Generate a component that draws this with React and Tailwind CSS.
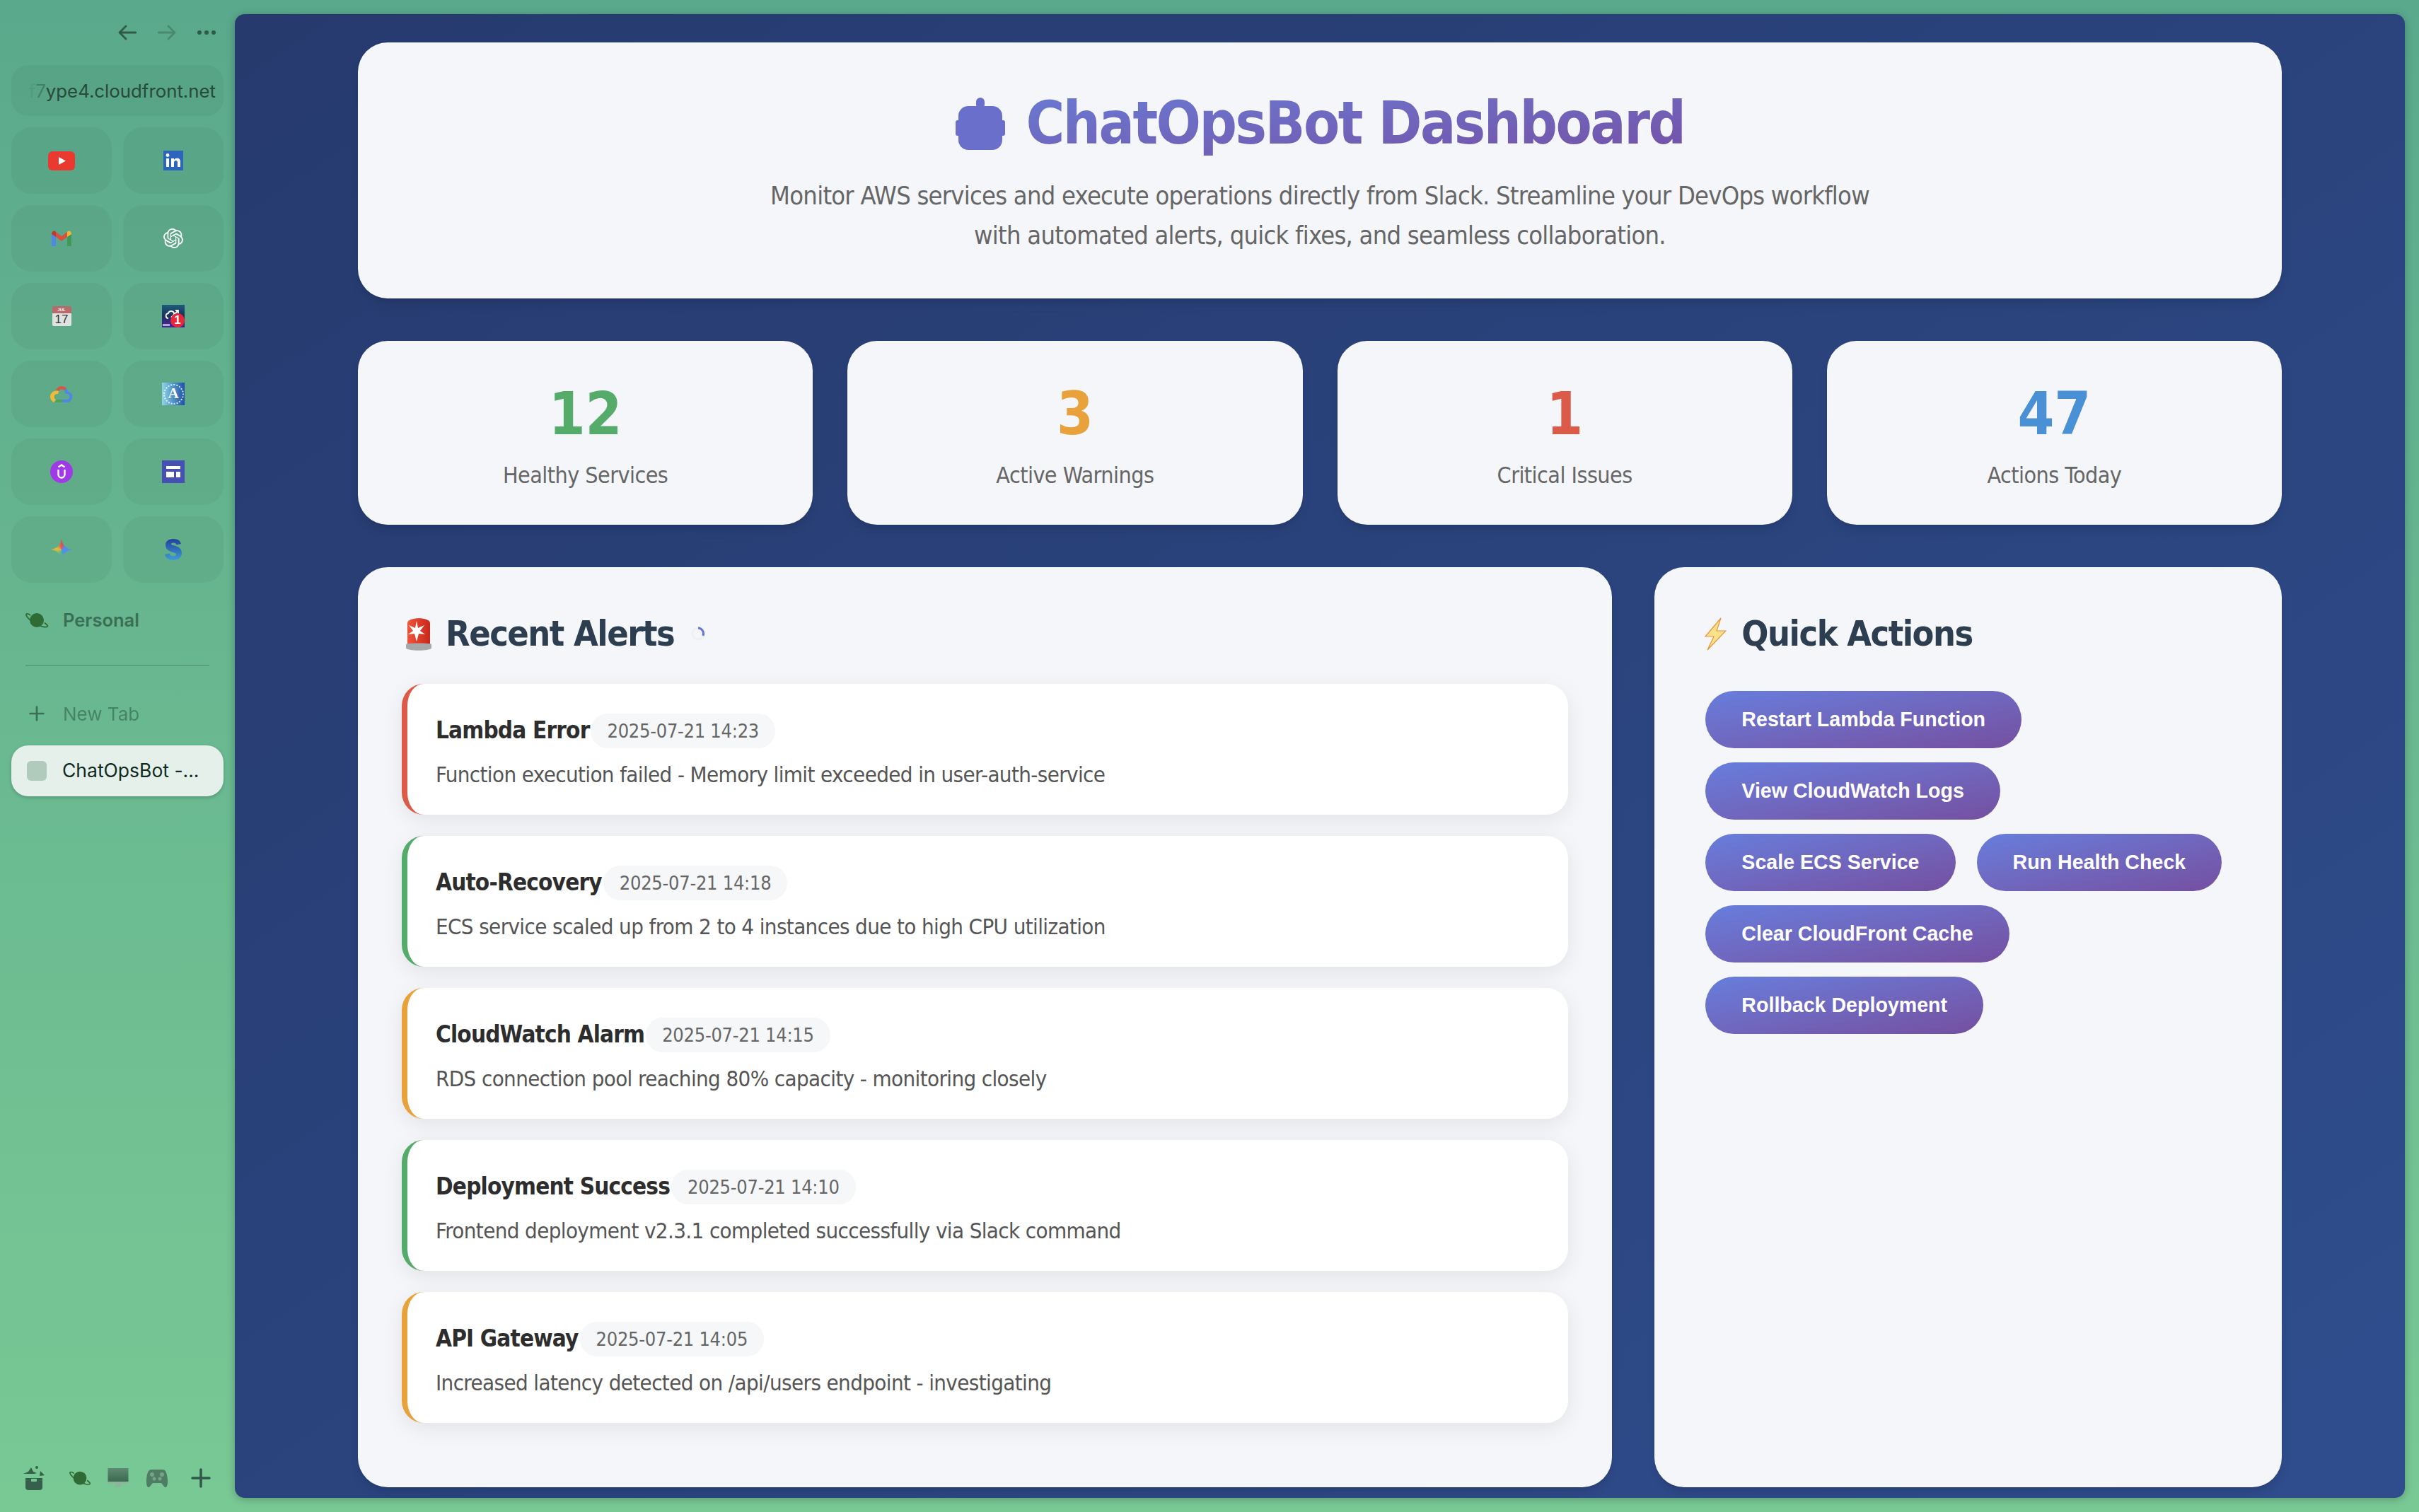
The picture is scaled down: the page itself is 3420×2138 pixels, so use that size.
import { Plus } from 'lucide-react'
import { SiOpenai } from 'react-icons/si'

const sf = "font-['Inter',sans-serif] tracking-normal [font-stretch:normal]"

const Planet = ({ className }) => (
  <svg viewBox="0 0 32 24" className={className}>
    <circle cx="16" cy="12" r="10" fill="#2f6b34" />
    <path d="M6.500 4.500C3.500 2.500 1 2.500 1 4c0 3 6 9 13 13s15 5.500 17 4c1-1-1-3-3.500-5" fill="none" stroke="#2f6b34" strokeWidth="1.800" strokeLinecap="round" />
  </svg>
)

const Tile = ({ children }) => (
  <div className="h-[94px] rounded-[28px] bg-black/[0.04] flex items-center justify-center">{children}</div>
)

const tiles = [
  <svg key="yt" viewBox="0 0 38 27" className="w-[38px] h-[27px]"><rect width="38" height="27" rx="6" fill="#ea3a2f" /><path d="M15 8l10 5.500-10 5.500z" fill="#fff" /></svg>,
  <svg key="li" viewBox="0 0 28 28" className="w-[28px] h-[28px]">
    <rect width="28" height="28" fill="#2d64bc" />
    <rect x="4" y="11" width="4" height="12" fill="#fff" />
    <circle cx="6" cy="6.500" r="2.400" fill="#fff" />
    <path d="M11 11h4v2c1-1.500 2.500-2.300 4.300-2.300 3.400 0 4.700 2 4.700 5.500V23h-4v-6c0-1.800-.6-3-2.200-3-1.700 0-2.800 1.200-2.800 3v6h-4z" fill="#fff" />
  </svg>,
  <svg key="gm" viewBox="0 0 28 22" className="w-[28px] h-[22px]">
    <path d="M0 5v16a1 1 0 0 0 1 1h5V9z" fill="#4f86e8" />
    <path d="M22 9v13h5a1 1 0 0 0 1-1V5z" fill="#3f9a57" />
    <path d="M6 9L14 15l8-6V2l-8 6-8-6z" fill="#d9503f" />
    <path d="M0 5c0-4 4-6 6-3v7z" fill="#bf3a2f" />
    <path d="M22 2c2-3 6-1 6 3l-6 4z" fill="#f2b632" />
  </svg>,
  <SiOpenai key="gpt" className="w-[28px] h-[28px] text-white" />,
  <div key="cal" className="w-[27px] h-[28px] flex flex-col overflow-hidden rounded-[2px]">
    <div className="h-[10px] bg-[#b96a6a] text-[6px] leading-[10px] text-white text-center font-['Liberation_Sans'] tracking-normal font-bold">JUL</div>
    <div className="flex-1 bg-[#dfe3e0] text-[#333] text-[17px] leading-[18px] text-center font-['Liberation_Sans'] tracking-normal">17</div>
  </div>,
  <div key="zero" className="relative w-[32px] h-[32px] bg-gradient-to-b from-[#1d5c78] via-[#1a2f60] to-[#4b1da0]">
    <svg viewBox="0 0 32 32" fill="none" stroke="#fff" strokeWidth="1.800" className="w-[32px] h-[32px]">
      <path d="M9 19c-4 0-5-6 0-7 1-4 7-4 8 0 1 0 2 .5 2.500 1" />
      <path d="M13 18l10-10m-4 0h4v4" />
    </svg>
    <div className="absolute left-[1px] bottom-[2px] w-[10px] h-[3px] bg-white/60" />
    <div className="absolute right-0 bottom-0 w-[20px] h-[20px] rounded-full bg-[#e8273a] text-white text-[17px] leading-[20px] text-center font-bold font-['Liberation_Sans'] tracking-normal">1</div>
  </div>,
  <svg key="gc" viewBox="0 0 32 26" className="w-[32px] h-[26px]">
    <path d="M8 8a9 9 0 0 1 15-3l-3 3a5 5 0 0 0-8 1z" fill="#dd5343" />
    <path d="M23 5a9 9 0 0 1 2 5c6 1 8 6 5 11-1 2-3 4-6 4h-7v-4h7c4 0 5-7 0-8h-3c0-2-1-4-1-5z" fill="#4f86e8" />
    <path d="M17 21h-8l-2 4h10z" fill="#4ea35a" />
    <path d="M12 9c-7-2-12 3-12 8 0 3 2 6 5 8l3-4c-4-2-3-9 3-8z" fill="#f3bb34" />
  </svg>,
  <div key="a" className="w-[32px] h-[32px] bg-gradient-to-r from-[#8fd6e6] to-[#1f4fa8] flex items-center justify-center">
    <div className="w-[29px] h-[29px] rounded-full border-2 border-dotted border-white/80 flex items-center justify-center text-white text-[21px] font-bold font-['Liberation_Serif'] tracking-normal">A</div>
  </div>,
  <div key="u" className="w-[32px] h-[32px] rounded-full bg-[#a03ae8] flex items-center justify-center">
    <svg viewBox="0 0 32 32" fill="none" stroke="#fff" strokeWidth="2.400" className="w-[32px] h-[32px]">
      <path d="M11.500 9.500L16 6.500l4.500 3" />
      <path d="M11.500 13v7a4.500 4.500 0 0 0 9 0v-7" />
    </svg>
  </div>,
  <svg key="sq" viewBox="0 0 32 32" className="w-[32px] h-[32px]">
    <rect width="32" height="32" fill="#4650b4" />
    <rect x="6" y="8" width="20" height="4" fill="#fff" />
    <rect x="6" y="16" width="11" height="8" fill="#fff" />
    <rect x="20" y="16" width="6" height="8" fill="#fff" />
  </svg>,
  <div key="gem" className="w-[30px] h-[30px] bg-[conic-gradient(#d9534f,#4f8ef0_20%,#4f8ef0_40%,#5dbb7a_55%,#e8b93f_78%,#d9534f)] [clip-path:path('M15_0C16.5_9_21_13.5_30_15C21_16.5_16.5_21_15_30C13.5_21_9_16.5_0_15C9_13.5_13.5_9_15_0Z')]" />,
  <svg key="s" viewBox="0 0 24 30" className="w-[24px] h-[30px]">
    <defs>
      <linearGradient id="sgrad" x1="0" y1="0" x2="0" y2="1">
        <stop offset="0" stopColor="#23409a" />
        <stop offset="1" stopColor="#3f9bd8" />
      </linearGradient>
    </defs>
    <path d="M12 0c6 0 10 2.500 11 7l-6.500 1.500C16 6.500 14.500 5.500 12 5.500c-2 0-3 .8-3 1.800 0 3 15 1.200 15 13 0 6-5 9.700-12 9.700-7 0-11-3-12-8l6.500-1.500c.6 2.500 2.500 4 5.500 4 2.500 0 4-1 4-2.400C17 18 1 20 1 8.500 1 3.500 5.500 0 12 0z" fill="url(#sgrad)" />
  </svg>,
]

const Sidebar = () => (
  <aside className={`w-[332px] shrink-0 h-full px-4 flex flex-col ${sf}`}>
    <div className="h-[92px] flex items-center justify-end gap-[30px] pr-[11px] text-[#2f5a48]">
      <svg viewBox="0 0 26 22" className="w-[26px] h-[22px]" fill="none" stroke="currentColor" strokeWidth="2.800" strokeLinecap="round" strokeLinejoin="round">
        <path d="M25 11H2M11 2l-9 9 9 9" />
      </svg>
      <svg viewBox="0 0 26 22" className="w-[26px] h-[22px] opacity-40" fill="none" stroke="currentColor" strokeWidth="2.800" strokeLinecap="round" strokeLinejoin="round">
        <path d="M1 11h23M15 2l9 9-9 9" />
      </svg>
      <svg viewBox="0 0 26 6" className="w-[26px] h-[6px]" fill="currentColor">
        <circle cx="3" cy="3" r="3" />
        <circle cx="13" cy="3" r="3" />
        <circle cx="23" cy="3" r="3" />
      </svg>
    </div>
    <div className="h-[72px] rounded-[24px] bg-black/[0.04] flex items-center justify-end pr-[11px] pt-[3px] overflow-hidden whitespace-nowrap text-[25.800px] text-[#274a3c]">
      <span className="opacity-10">f</span><span className="opacity-40">7</span>ype4.cloudfront.net
    </div>
    <div className="grid grid-cols-2 gap-x-4 gap-y-4 mt-4">
      {tiles.map((icon, i) => <Tile key={i}>{icon}</Tile>)}
    </div>
    <div className="flex items-center mt-[33px] pl-5 h-[40px]">
      <Planet className="w-[32px] h-[24px]" />
      <span className="ml-[21px] font-semibold text-[25.500px] text-[#3a6f55]">Personal</span>
    </div>
    <div className="mx-5 mt-[43px] h-[2px] bg-[#58a07f]" />
    <div className="flex items-center mt-[47px] pl-[20px] h-[40px] text-[#3a6f55]">
      <Plus className="w-[32px] h-[32px]" strokeWidth={2} />
      <span className="ml-[21px] text-[26px] opacity-70">New Tab</span>
    </div>
    <div className="mt-[25px] h-[72px] rounded-[24px] bg-[#e6f0ea] shadow-[0_2px_5px_rgba(0,0,0,0.2)] flex items-center pl-[22px]">
      <div className="w-[28px] h-[28px] rounded-[6px] bg-[#b0cabb]" />
      <span className="ml-[22px] text-[26.500px] text-[#0f2a1e] whitespace-nowrap">ChatOpsBot -...</span>
    </div>
    <div className="mt-auto mb-[30px] flex items-center h-[36px] text-[#30584a]">
      <svg viewBox="0 0 30 34" className="ml-[17px] w-[30px] h-[34px]" fill="#35614b">
        <path d="M3 17h24v13a4 4 0 0 1-4 4H7a4 4 0 0 1-4-4z" />
        <rect x="11" y="18" width="8" height="4" rx="1" fill="#78c894" />
        <path d="M0 11l7-3 4-6 3 6 5 2-3 1z" />
        <path d="M24 7l6 6-7 1z" />
        <circle cx="19" cy="2" r="2" />
      </svg>
      <Planet className="ml-[35px] w-[30px] h-[24px]" />
      <svg viewBox="0 0 30 28" className="ml-[24px] w-[30px] h-[28px]">
        <defs>
          <linearGradient id="screen" x1="0" y1="0" x2="0" y2="1">
            <stop offset="0" stopColor="#5f8a72" />
            <stop offset="1" stopColor="#386b50" />
          </linearGradient>
        </defs>
        <rect x="0.500" y="0" width="29" height="19" fill="url(#screen)" />
        <rect x="0" y="19" width="30" height="3" fill="#8fb49e" />
        <rect x="11" y="22" width="8" height="5" fill="#8fb49e" />
      </svg>
      <svg viewBox="0 0 30 26" className="ml-[25px] w-[30px] h-[26px]">
        <path d="M7 1h16c4 0 6 4 7 14 .5 7-1 11-3 11-3 0-4-6-7-6H10c-3 0-4 6-7 6-2 0-3.500-4-3-11C1 5 3 1 7 1z" fill="#4f7d64" />
        <circle cx="8" cy="8" r="3" fill="#75a288" />
        <circle cx="22" cy="8" r="3" fill="#75a288" />
        <circle cx="11" cy="14" r="2.500" fill="#75a288" />
        <circle cx="19" cy="14" r="2.500" fill="#75a288" />
      </svg>
      <svg viewBox="0 0 28 28" className="ml-[33px] w-[28px] h-[28px]" fill="none" stroke="currentColor" strokeWidth="3.500" strokeLinecap="round">
        <path d="M14 2v24M2 14h24" />
      </svg>
    </div>
  </aside>
)

const stats = [
  { value: '12', label: 'Healthy Services', color: 'text-[#55ab6a]' },
  { value: '3', label: 'Active Warnings', color: 'text-[#e9a23b]' },
  { value: '1', label: 'Critical Issues', color: 'text-[#dc5a48]' },
  { value: '47', label: 'Actions Today', color: 'text-[#4a90d4]' },
]

const alerts = [
  { title: 'Lambda Error', time: '2025-07-21 14:23', text: 'Function execution failed - Memory limit exceeded in user-auth-service', border: 'border-[#dc5a48]' },
  { title: 'Auto-Recovery', time: '2025-07-21 14:18', text: 'ECS service scaled up from 2 to 4 instances due to high CPU utilization', border: 'border-[#55ab6a]' },
  { title: 'CloudWatch Alarm', time: '2025-07-21 14:15', text: 'RDS connection pool reaching 80% capacity - monitoring closely', border: 'border-[#e9a23b]' },
  { title: 'Deployment Success', time: '2025-07-21 14:10', text: 'Frontend deployment v2.3.1 completed successfully via Slack command', border: 'border-[#55ab6a]' },
  { title: 'API Gateway', time: '2025-07-21 14:05', text: 'Increased latency detected on /api/users endpoint - investigating', border: 'border-[#e9a23b]' },
]

const actions = ['Restart Lambda Function', 'View CloudWatch Logs', 'Scale ECS Service', 'Run Health Check', 'Clear CloudFront Cache', 'Rollback Deployment']

const AlertCard = ({ alert }) => (
  <div className={`h-[185px] rounded-[31px] bg-white border-l-[8px] ${alert.border} shadow-[0_8px_30px_rgba(0,0,0,0.08)] pl-[40px] pt-[41px]`}>
    <div className="flex items-center h-[50px]">
      <span className="font-bold text-[33px] tracking-[-0.025em] text-[#2d2d2d]">{alert.title}</span>
      <span className="ml-[2px] px-[23px] h-[49px] leading-[49px] rounded-[24px] bg-[#f6f7f9] text-[27px] tracking-[-0.01em] text-[#666]">{alert.time}</span>
    </div>
    <p className="mt-[15px] text-[31px] leading-[44px] tracking-[-0.02em] text-[#555]">{alert.text}</p>
  </div>
)

export default function App() {
  return (
    <div className="w-[3420px] h-[2138px] flex overflow-hidden bg-gradient-to-b from-[#5aa98c] to-[#79c995] font-['DejaVu_Sans',sans-serif] [font-stretch:condensed]">
      <Sidebar />
      <main className="w-[3068px] h-[2098px] mt-5 rounded-[14px] bg-gradient-to-br from-[#263a6e] to-[#2f4d8d] shadow-[0_2px_12px_rgba(0,0,0,0.25)] pt-[40px] px-[174px] overflow-hidden">
        <section className="h-[362px] rounded-[42px] bg-[#f4f6fa] flex flex-col items-center pt-[60px] shadow-lg">
          <h1 className="flex items-center h-[110px] text-[83px] font-bold tracking-[-0.03em] bg-gradient-to-br from-[#667ed8] to-[#744fa4] bg-clip-text text-transparent">
            <svg viewBox="0 0 70 74" className="w-[70px] h-[74px] mr-[30px]" fill="#6a6fcc">
              <rect x="29" y="0" width="12" height="16" rx="6" />
              <rect x="4" y="12" width="62" height="62" rx="14" />
              <rect x="0" y="32" width="70" height="22" rx="3" />
            </svg>
            ChatOpsBot Dashboard
          </h1>
          <p className="mt-[19px] text-[36px] leading-[56px] tracking-[-0.021em] text-[#666] text-center">
            Monitor AWS services and execute operations directly from Slack. Streamline your DevOps workflow<br />
            with automated alerts, quick fixes, and seamless collaboration.
          </p>
        </section>

        <section className="grid grid-cols-4 gap-[49px] mt-[60px]">
          {stats.map((s) => (
            <div key={s.label} className="h-[260px] rounded-[42px] bg-[#f4f6fa] flex flex-col items-center pt-[59px] shadow-lg">
              <div className={`h-[90px] leading-[90px] text-[83px] font-bold ${s.color}`}>{s.value}</div>
              <div className="mt-[17px] text-[32px] tracking-[-0.017em] text-[#666]">{s.label}</div>
            </div>
          ))}
        </section>

        <section className="grid grid-cols-[2fr_1fr] gap-[60px] mt-[60px] h-[1301px]">
          <div className="rounded-[42px] bg-[#f4f6fa] px-[62px] pt-[62px] shadow-lg">
            <h2 className="flex items-center h-[64px] text-[50px] font-bold tracking-[-0.03em] text-[#2c3e50]">
              <svg viewBox="0 0 36 47" className="w-[36px] h-[47px] ml-[6px] mr-[20px]">
                <defs>
                  <linearGradient id="dome" x1="0" y1="0" x2="1" y2="0">
                    <stop offset="0" stopColor="#f0553a" />
                    <stop offset="1" stopColor="#c9281a" />
                  </linearGradient>
                </defs>
                <path d="M2 38V8c0-9 32-9 32 0v30z" fill="url(#dome)" />
                <path d="M0 38c0-2 36-2 36 0v5c0 5-36 5-36 0z" fill="#a8a8a8" />
                <path d="M15 5l2 10 9-4-6 8 7 5-9-1-3 11-3-11-9 1 7-5-6-8 9 4z" fill="#fff" />
              </svg>
              Recent Alerts
              <svg viewBox="0 0 20 22" className="ml-[25px] w-[20px] h-[22px]" fill="none" strokeWidth="3">
                <circle cx="9" cy="11" r="8" stroke="#f0f0f0" />
                <path d="M9 3a8 8 0 0 1 7 11" stroke="#6677dd" />
              </svg>
            </h2>
            <div className="flex flex-col gap-[30px] mt-[39px]">
              {alerts.map((a) => <AlertCard key={a.title} alert={a} />)}
            </div>
          </div>
          <div className="rounded-[42px] bg-[#f4f6fa] px-[62px] pt-[62px] shadow-lg">
            <h2 className="flex items-center h-[64px] text-[50px] font-bold tracking-[-0.03em] text-[#2c3e50]">
              <svg viewBox="0 0 32 47" className="w-[32px] h-[47px] ml-[8px] mr-[21px]" fill="#fde08a" stroke="#e8963a" strokeWidth="1.200">
                <path d="M24 1L2 27h12L5 46l26-27H18z" />
              </svg>
              Quick Actions
            </h2>
            <div className="flex flex-wrap gap-x-[30px] gap-y-[20px] mt-[49px] px-[10px]">
              {actions.map((label) => (
                <button key={label} className="h-[81px] px-[51px] rounded-full bg-gradient-to-br from-[#667edd] to-[#744fa0] text-white font-['Liberation_Sans'] tracking-normal [font-stretch:normal] font-bold text-[28.600px] whitespace-nowrap">
                  {label}
                </button>
              ))}
            </div>
          </div>
        </section>
      </main>
    </div>
  )
}
